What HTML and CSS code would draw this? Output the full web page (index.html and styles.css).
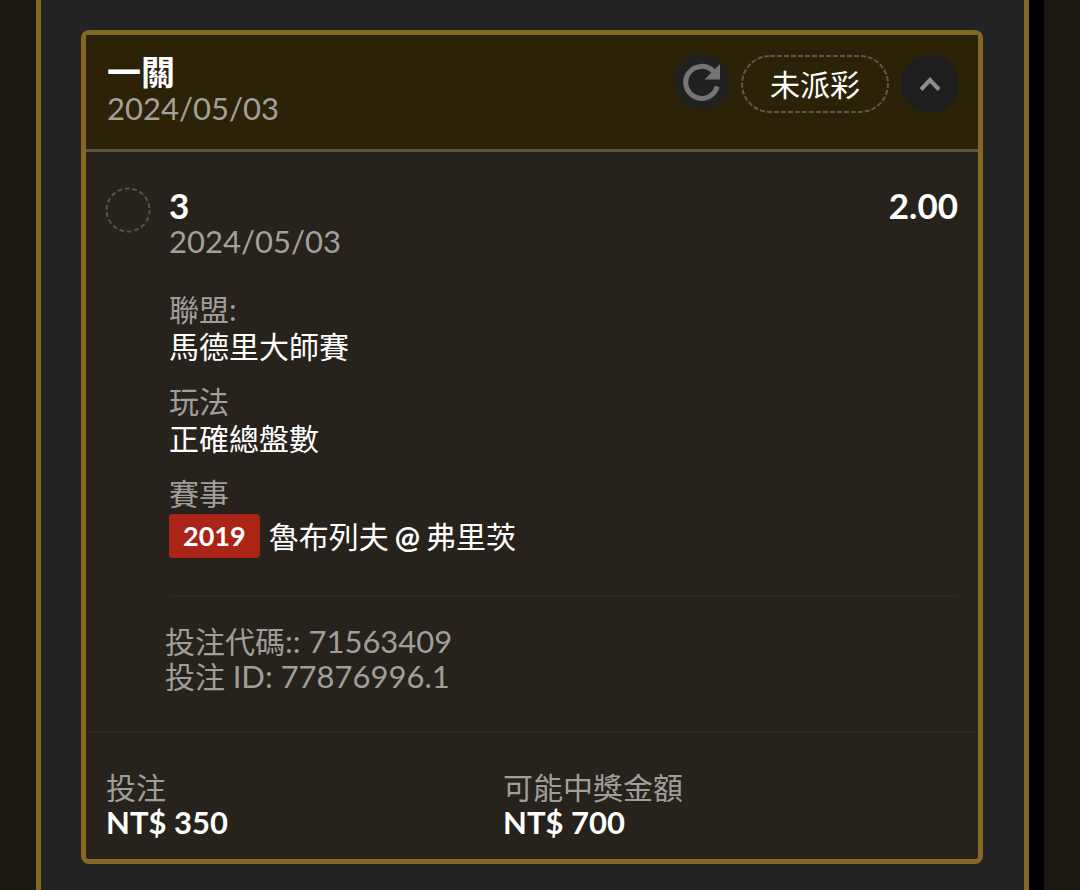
FILE: index.html
```html
<!DOCTYPE html>
<html lang="zh-Hant">
<head>
<meta charset="utf-8">
<meta name="viewport" content="width=device-width, initial-scale=1">
<title>投注</title>
<link rel="stylesheet" href="styles.css">
</head>
<body>
<main class="panel">
  <article class="card">
    <header class="card-head">
      <div class="head-text">
        <h1 class="title">一關</h1>
        <time class="date" datetime="2024-05-03">2024/05/03</time>
      </div>
      <div class="actions">
        <button class="round refresh" type="button" aria-label="重新整理">
          <svg class="refresh-icon" viewBox="0 0 38 38" aria-hidden="true">
            <path d="M30.5 8.5A16 16 0 1 0 34.2 23.500" fill="none" stroke="#757575" stroke-width="5"/>
            <path d="M37 1V16.500H21.500Z" fill="#757575"/>
          </svg>
        </button>
        <span class="status">
          <svg class="outline" aria-hidden="true"><rect class="outline-pill" x="1" y="1" rx="28" ry="28"/></svg>
          未派彩
        </span>
        <button class="round toggle" type="button" aria-label="收合">
          <svg class="chevron" viewBox="0 0 22 16" aria-hidden="true">
            <path d="M2 13.500 11 4 20 13.500" fill="none" stroke="#8d8d8d" stroke-width="4"/>
          </svg>
        </button>
      </div>
    </header>

    <section class="bet">
      <svg class="marker" viewBox="0 0 46 46" aria-hidden="true">
        <circle cx="23" cy="23" r="21.500" fill="none" stroke="#56544f" stroke-width="2" stroke-dasharray="4.650 2.850"/>
      </svg>
      <div class="bet-main">
        <div class="bet-top">
          <h2 class="pick">3</h2>
          <span class="odds">2.00</span>
        </div>
        <time class="date" datetime="2024-05-03">2024/05/03</time>
        <dl class="details">
          <div class="detail"><dt>聯盟:</dt><dd>馬德里大師賽</dd></div>
          <div class="detail"><dt>玩法</dt><dd>正確總盤數</dd></div>
          <div class="detail">
            <dt>賽事</dt>
            <dd class="match">
              <span class="badge">2019</span>
              <span class="teams"><span>魯布列夫</span><span class="at">@</span><span>弗里茨</span></span>
            </dd>
          </div>
        </dl>
      </div>
    </section>

    <section class="codes">
      <p>投注代碼<span class="num">:: 71563409</span></p>
      <p>投注 <span class="num">ID: 77876996.1</span></p>
    </section>

    <footer class="totals">
      <div class="total"><span class="label">投注</span><strong class="amount">NT$ 350</strong></div>
      <div class="total"><span class="label">可能中獎金額</span><strong class="amount">NT$ 700</strong></div>
    </footer>
  </article>
</main>
</body>
</html>
```

FILE: styles.css
```css
* {
  box-sizing: border-box;
}

body {
  margin: 0;
  min-height: 100vh;
  display: flex;
  padding: 0 51px 0 36px;
  background: #1c1811;
  color: #fff;
  font: 30px/37px Lato, "Noto Sans CJK TC", sans-serif;
}

h1, h2, p, dl, dd {
  margin: 0;
}

.panel {
  flex: 1;
  padding: 30px 41px 27px 40px;
  background: #232323;
  border: solid #836723;
  border-width: 0 5px;
  box-shadow: 15px 0 #000;
}

.card {
  background: #27231c;
  border: 5px solid #836723;
  border-radius: 8px;
}

.card-head {
  display: flex;
  justify-content: space-between;
  align-items: flex-start;
  padding: 18px 19px 22px 21px;
  background: #2c2208;
  border-bottom: 3px solid #5b5546;
}

.head-text {
  display: flex;
  flex-direction: column;
}

.title {
  font-size: 34px;
  line-height: 37px;
  font-weight: 700;
}

.date {
  display: block;
  color: #a3a09b;
  font-size: 31px;
}

.actions {
  display: flex;
  align-items: flex-start;
  gap: 12px;
  padding-top: 2px;
}

.round {
  display: grid;
  place-items: center;
  padding: 0;
  border: 0;
  border-radius: 50%;
  cursor: pointer;
}

.refresh {
  width: 54px;
  height: 54px;
  background: #202122;
}

.refresh-icon {
  width: 38px;
  height: 38px;
}

.status {
  position: relative;
  height: 58px;
  padding: 0 29px;
  line-height: 58px;
}

.outline {
  position: absolute;
  inset: 0;
  width: 100%;
  height: 100%;
}

.outline-pill {
  width: calc(100% - 2px);
  height: calc(100% - 2px);
  fill: none;
  stroke: #5c584e;
  stroke-width: 2;
  stroke-dasharray: 5 2;
}

.toggle {
  width: 58px;
  height: 58px;
  background: #1e1e1e;
}

.chevron {
  width: 22px;
  height: 16px;
}

.bet {
  display: flex;
  gap: 18px;
  margin: 0 20px 0 19px;
  padding-top: 35px;
}

.marker {
  flex: none;
  width: 46px;
  height: 46px;
}

.bet-main {
  flex: 1;
  padding-bottom: 37px;
  border-bottom: 2px solid #2b2721;
}

.bet-top {
  display: flex;
  justify-content: space-between;
}

.pick, .odds {
  font-size: 35px;
  line-height: 36px;
  font-weight: 700;
}

.details {
  display: grid;
  gap: 18px;
  padding-top: 31px;
}

.detail dt, .label {
  color: #a09e9a;
}

.match {
  display: flex;
  align-items: center;
  gap: 9px;
  padding-top: 2px;
}

.badge {
  padding: 0 14px;
  background: #ab2418;
  border-radius: 4px;
  font-size: 27px;
  font-weight: 700;
  line-height: 44px;
}

.teams {
  display: flex;
  gap: 6px;
}

.at {
  font-weight: 700;
}

.codes {
  padding: 27px 20px 37px 79px;
  border-bottom: 2px solid #2d2922;
  color: #a09e9a;
  line-height: 35px;
}

.num {
  font-size: 31px;
}

.totals {
  display: grid;
  grid-template-columns: 397px 1fr;
  padding: 37px 20px 19px;
  line-height: 35px;
}

.total {
  display: flex;
  flex-direction: column;
}

.amount {
  font-size: 31px;
  font-weight: 700;
}
```
